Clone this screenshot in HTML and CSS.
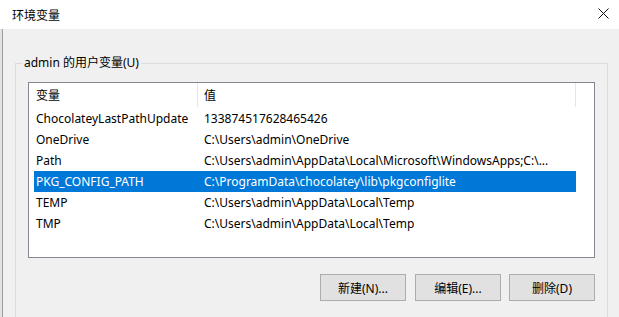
FILE: index.html
```html
<!DOCTYPE html>
<html lang="zh-CN">
<head>
<meta charset="utf-8">
<title>环境变量</title>
<link rel="stylesheet" href="styles.css">
</head>
<body>
<div class="titlebar">
  <span class="title">环境变量</span>
  <svg class="close" width="11" height="11" viewBox="0 0 11 11"><path d="M0.5 0.5 L10.5 10.5 M10.5 0.5 L0.5 10.5" stroke="#111" stroke-width="1" fill="none"/></svg>
</div>
<div class="main">
  <div class="edge"></div>
  <div class="content">
    <fieldset class="group">
      <legend class="group-label">admin 的用户变量(U)</legend>
      <div class="list">
        <div class="header">
          <div class="hcell hname">变量</div>
          <div class="hcell hvalue">值</div>
        </div>
        <div class="row"><div class="cname">ChocolateyLastPathUpdate</div><div class="cvalue">133874517628465426</div></div>
        <div class="row"><div class="cname">OneDrive</div><div class="cvalue">C:\Users\admin\OneDrive</div></div>
        <div class="row"><div class="cname">Path</div><div class="cvalue">C:\Users\admin\AppData\Local\Microsoft\WindowsApps;C:\...</div></div>
        <div class="row selected"><div class="cname">PKG_CONFIG_PATH</div><div class="cvalue">C:\ProgramData\chocolatey\lib\pkgconfiglite</div></div>
        <div class="row"><div class="cname">TEMP</div><div class="cvalue">C:\Users\admin\AppData\Local\Temp</div></div>
        <div class="row"><div class="cname">TMP</div><div class="cvalue">C:\Users\admin\AppData\Local\Temp</div></div>
      </div>
      <div class="buttons">
        <button class="btn btn-first">新建(N)...</button>
        <button class="btn">编辑(E)...</button>
        <button class="btn">删除(D)</button>
      </div>
    </fieldset>
  </div>
</div>
</body>
</html>
```

FILE: styles.css
```css
html, body {
  margin: 0;
  padding: 0;
}
body {
  width: 619px;
  height: 317px;
  overflow: hidden;
  background: #f0f0f0;
  font-family: "Noto Sans", "Noto Sans CJK SC", sans-serif;
  font-size: 12px;
  color: #000;
}
.titlebar {
  height: 29px;
  background: #fff;
  display: flex;
  align-items: center;
  justify-content: space-between;
  padding: 0 10px 0 12px;
  box-sizing: border-box;
}
.title {
  font-family: "Noto Sans CJK SC", sans-serif;
  font-size: 12px;
  line-height: 16px;
  color: #000;
}
.close {
  display: block;
  margin-top: -2px;
}
.main {
  display: flex;
  height: 288px;
}
.edge {
  width: 2px;
  background: #e2e2e2;
  border-right: 1px solid #9c9c9c;
  flex: none;
}
.content {
  flex: 1;
  display: flex;
  flex-direction: column;
  padding: 0 12px;
}
.group {
  flex: 1;
  margin: 26px 0 0;
  border: 1px solid #dcdcdc;
  border-bottom: 0;
  padding: 0 12px;
  min-width: 0;
  min-height: 0;
}
.group-label {
  padding: 0 2px;
  margin-left: -6px;
  line-height: 16px;
  font-size: 12px;
}
.list {
  margin-top: 11px;
  width: 567px;
  height: 176px;
  box-sizing: border-box;
  border: 1px solid #828790;
  background: #fff;
  padding-left: 5px;
}
.header {
  display: flex;
  height: 25px;
}
.hcell {
  box-sizing: border-box;
  height: 24px;
  line-height: 24px;
  border-right: 1px solid #e5e5e5;
  font-family: "Noto Sans CJK SC", sans-serif;
}
.hname {
  width: 164px;
  padding-left: 2px;
}
.hvalue {
  width: 378px;
  padding-left: 6px;
}
.row {
  display: flex;
  width: 542px;
  height: 21px;
  line-height: 21px;
  white-space: nowrap;
}
.cname {
  width: 168px;
  padding-left: 2px;
  box-sizing: border-box;
  flex: none;
}
.cvalue {
  padding-left: 2px;
  overflow: hidden;
}
.selected {
  background: #0078d7;
  color: #fff;
}
.buttons {
  display: flex;
  justify-content: flex-end;
  gap: 8px;
  width: 567px;
  margin-top: 16px;
}
.btn {
  width: 86px;
  height: 27px;
  box-sizing: border-box;
  border: 1px solid #adadad;
  background: #e1e1e1;
  font-family: "Noto Sans", "Noto Sans CJK SC", sans-serif;
  font-size: 12px;
  color: #000;
  padding: 0;
  margin: 0;
}
.btn-first {
  margin-right: 1px;
}
```
